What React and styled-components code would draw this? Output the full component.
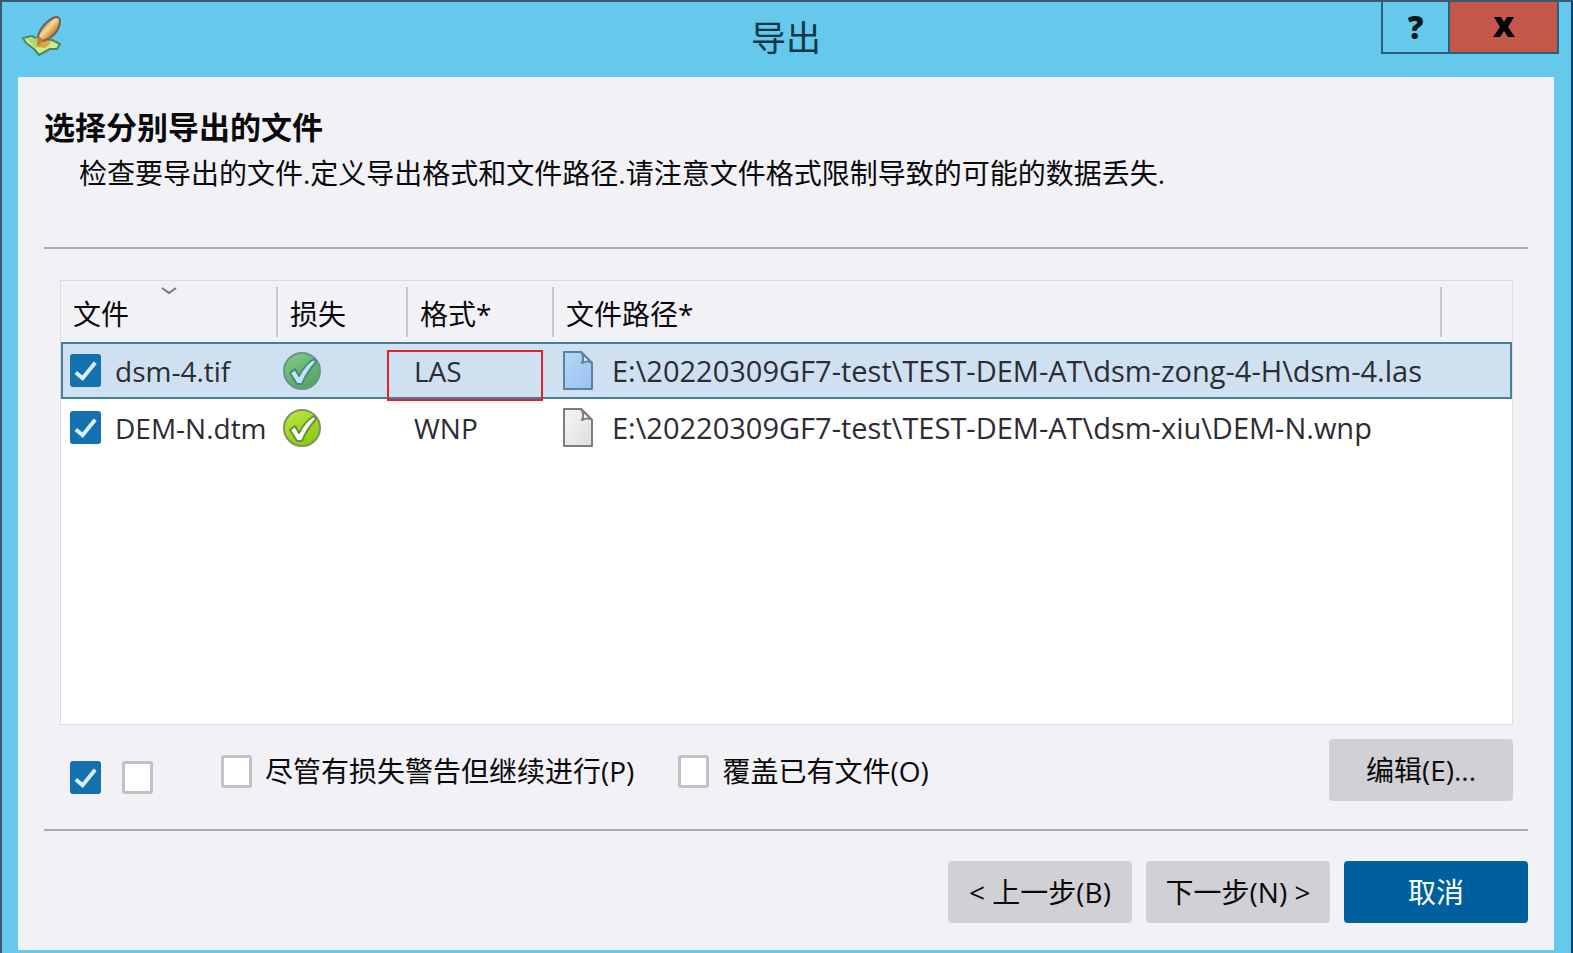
import React, { useState } from "react";
import styled, { createGlobalStyle, css } from "styled-components";

const palette = {
  frame: "#64c9ea",
  edge: "#3c5a6c",
  edgeRight: "#123f70",
  panel: "#f1f1f6",
  text: "#0a0a0c",
  line: "#aaaab0",
  accent: "#1570b0",
  primary: "#005f9e",
  danger: "#c4574a",
};

const columns = [
  { id: "file", label: "文件", width: 217, sorted: true },
  { id: "loss", label: "损失", width: 130 },
  { id: "format", label: "格式*", width: 146 },
  { id: "path", label: "文件路径*" },
  { id: "rest", label: "", width: 70 },
];

const filesData = [
  {
    id: 1,
    name: "dsm-4.tif",
    format: "LAS",
    path: "E:\\20220309GF7-test\\TEST-DEM-AT\\dsm-zong-4-H\\dsm-4.las",
    selected: true,
  },
  {
    id: 2,
    name: "DEM-N.dtm",
    format: "WNP",
    path: "E:\\20220309GF7-test\\TEST-DEM-AT\\dsm-xiu\\DEM-N.wnp",
  },
];

const AppLogo = () => (
  <svg width="40" height="42" viewBox="0 0 40 42" aria-hidden="true">
    <defs>
      <linearGradient id="pen" x1="0" y1="0" x2="1" y2="1">
        <stop offset="0.25" stopColor="#8c7460" />
        <stop offset="0.45" stopColor="#f6dc9c" />
        <stop offset="0.6" stopColor="#dca850" />
        <stop offset="0.85" stopColor="#7a6048" />
      </linearGradient>
    </defs>
    <path
      d="M1 22 L10 20 L16 23 L30 24 L38 28 L35 33 L28 33 L17 39 L12 33 L4 27 Z"
      fill="#cdea8e"
      stroke="#4a8c58"
      strokeWidth="2"
      strokeLinejoin="round"
    />
    <path d="M5 23 L12 22 L18 28 L14 32 Z" fill="#a4dc78" />
    <path d="M14 22 L20 20 L29 27 L23 32 L16 31 Z" fill="#d9a83c" />
    <path
      d="M16 21 C17 13 26 3 34 1 C39 1 39 7 36 13 C33 19 27 23 21 25 Z"
      fill="url(#pen)"
      stroke="#6c6258"
      strokeWidth="2"
      strokeLinejoin="round"
    />
    <path d="M16 20 L22 24 L15 31 Z" fill="#c47c34" />
  </svg>
);

const StatusOk = ({ selected }) => (
  <svg width="40" height="42" viewBox="0 0 40 42" role="img" aria-label="OK">
    <defs>
      <linearGradient
        id={selected ? "ok-selected" : "ok"}
        x1="0"
        y1="0"
        x2="0.6"
        y2="1"
      >
        <stop offset="0" stopColor={selected ? "#86cc8c" : "#bfe94c"} />
        <stop offset="1" stopColor={selected ? "#51a75e" : "#8acc0c"} />
      </linearGradient>
    </defs>
    <circle
      cx="20"
      cy="21"
      r="18"
      fill={selected ? "url(#ok-selected)" : "url(#ok)"}
      stroke={selected ? "#68948e" : "#7f9460"}
      strokeWidth="2"
    />
    <path
      d="M8 23 L13 19 L17 26 C21 18 25 13 32 9 L34 12 C28 19 23 26 20 34 L15 34 Z"
      fill={selected ? "#c0e6f6" : "#fff"}
      stroke={selected ? "#4a8a7c" : "#6c8f3c"}
      strokeWidth="2"
      strokeLinejoin="round"
    />
  </svg>
);

const PageIcon = ({ selected }) => {
  const stroke = selected ? "#5f809e" : "#7c7c7c";

  return (
    <svg width="32" height="40" viewBox="0 0 32 40" aria-hidden="true">
      <defs>
        <linearGradient
          id={selected ? "page-selected" : "page"}
          x1="0"
          y1="0"
          x2="1"
          y2="1"
        >
          <stop offset="0" stopColor={selected ? "#b4d8f8" : "#f6f6f6"} />
          <stop offset="1" stopColor={selected ? "#96c2ee" : "#dedede"} />
        </linearGradient>
      </defs>
      <path
        d="M2 1 H19 L30 12 V38 H2 Z"
        fill={selected ? "url(#page-selected)" : "url(#page)"}
        stroke={stroke}
        strokeWidth="2"
        strokeLinejoin="round"
      />
      <path
        d="M19 1 C22 5 22 8 20 12 C24 10 27 10 30 12 Z"
        fill={selected ? "#dceefc" : "#fff"}
        stroke={stroke}
        strokeWidth="2"
        strokeLinejoin="round"
      />
    </svg>
  );
};

const CheckBox = ({ initial = false, ...rest }) => {
  const [checked, setChecked] = useState(initial);

  return (
    <BoxWrapper>
      <BoxInput
        type="checkbox"
        checked={checked}
        onChange={() => setChecked((prevState) => !prevState)}
        {...rest}
      />
      {checked && (
        <BoxTick viewBox="0 0 32 32" aria-hidden="true">
          <path
            d="M6 18 L13 24 L26 8"
            fill="none"
            stroke="#d8f0ff"
            strokeWidth="4"
          />
        </BoxTick>
      )}
    </BoxWrapper>
  );
};

const App = () => {
  const rows = filesData.map((file) => (
    <FileRow key={file.id} $selected={file.selected}>
      <Cell>
        <CellContent>
          <CheckBox initial aria-label={file.name} />
          {file.name}
        </CellContent>
      </Cell>
      <Cell>
        <CellContent $indent={4}>
          <StatusOk selected={file.selected} />
        </CellContent>
      </Cell>
      <Cell>
        <CellContent $indent={6}>{file.format}</CellContent>
        {file.selected && <Highlight />}
      </Cell>
      <PathCell colSpan={2}>
        <CellContent $indent={8} $gap={18}>
          <PageIcon selected={file.selected} />
          {file.path}
        </CellContent>
      </PathCell>
    </FileRow>
  ));

  return (
    <Window>
      <GlobalStyle />
      <TitleBar>
        <AppLogo />
        <WindowTitle>导出</WindowTitle>
        <WindowButtons>
          <HelpButton type="button" aria-label="Help">
            ?
          </HelpButton>
          <CloseButton type="button" aria-label="Close">
            <svg width="22" height="20" viewBox="0 0 22 20">
              <path d="M1 0 H8 L11 5 L14 0 H21 L15 10 L22 20 H15 L11 14 L7 20 H0 L7 10 Z" />
            </svg>
          </CloseButton>
        </WindowButtons>
      </TitleBar>
      <Panel>
        <Intro>
          <Heading>选择分别导出的文件</Heading>
          <Description>
            检查要导出的文件.定义导出格式和文件路径.请注意文件格式限制导致的可能的数据丢失.
          </Description>
        </Intro>
        <Main>
          <TableFrame>
            <FileTable>
              <thead>
                <tr>
                  {columns.map((column) => (
                    <HeaderCell key={column.id} $width={column.width}>
                      <HeaderLabel>
                        {column.label}
                        {column.sorted && (
                          <SortArrow viewBox="0 0 16 8" aria-hidden="true">
                            <path
                              d="M1 1 L8 6 L15 1"
                              fill="none"
                              stroke="#777"
                              strokeWidth="2"
                            />
                          </SortArrow>
                        )}
                      </HeaderLabel>
                    </HeaderCell>
                  ))}
                </tr>
              </thead>
              <tbody>{rows}</tbody>
            </FileTable>
          </TableFrame>
          <OptionsRow>
            <SelectBoxes>
              <CheckBox initial aria-label="全选" />
              <CheckBox aria-label="全不选" />
            </SelectBoxes>
            <Option>
              <CheckBox />
              尽管有损失警告但继续进行(P)
            </Option>
            <Option>
              <CheckBox />
              覆盖已有文件(O)
            </Option>
            <EditButton type="button">编辑(E)...</EditButton>
          </OptionsRow>
        </Main>
        <Footer>
          <Button type="button">&lt; 上一步(B)</Button>
          <Button type="button">下一步(N) &gt;</Button>
          <Button type="button" $primary>
            取消
          </Button>
        </Footer>
      </Panel>
    </Window>
  );
};

export default App;

const GlobalStyle = createGlobalStyle`
  * {
    box-sizing: border-box;
  }

  body {
    margin: 0;
    font-family: "Open Sans", "Noto Sans CJK SC", sans-serif;
    font-size: 28px;
    line-height: 40px;
    color: ${palette.text};
  }
`;

const Window = styled.div`
  display: flex;
  flex-direction: column;
  min-height: 100vh;
  padding: 0 17px 3px 16px;
  background: ${palette.frame};
  border: 2px solid ${palette.edge};
  border-right-color: ${palette.edgeRight};
  border-bottom: 0;
`;

const TitleBar = styled.header`
  display: grid;
  grid-template-columns: 1fr auto 1fr;
  height: 75px;

  > svg {
    margin: 14px 0 0 4px;
  }
`;

const WindowTitle = styled.h1`
  margin: 0;
  font-size: 35px;
  font-weight: 400;
  line-height: 72px;
  color: #0c3648;
`;

const WindowButtons = styled.div`
  display: flex;
  justify-content: flex-end;
  align-items: flex-start;
  margin-right: -5px;
`;

const windowButtonStyles = css`
  display: flex;
  justify-content: center;
  align-items: center;
  height: 52px;
  padding: 0;
  border: 2px solid #27617c;
  border-top: 0;
`;

const HelpButton = styled.button`
  ${windowButtonStyles};
  width: 67px;
  border-right: 0;
  background: transparent;
  color: #04141c;
  font: 800 31px "Open Sans", sans-serif;
`;

const CloseButton = styled.button`
  ${windowButtonStyles};
  width: 111px;
  background: ${palette.danger};
`;

const Panel = styled.main`
  display: flex;
  flex-direction: column;
  flex: 1;
  padding: 28px 26px;
  background: ${palette.panel};
`;

const Intro = styled.section`
  height: 144px;
  border-bottom: 2px solid ${palette.line};
`;

const Heading = styled.h2`
  margin: 0;
  font-size: 31px;
  line-height: 44px;
`;

const Description = styled.p`
  margin: 0 0 0 35px;
  line-height: 48px;
`;

const Main = styled.section`
  display: flex;
  flex-direction: column;
  flex: 1;
  padding: 31px 15px 28px 16px;
  border-bottom: 2px solid ${palette.line};
`;

const TableFrame = styled.div`
  flex: 1;
  background: #fff;
  border: 1px solid #dcdce0;
`;

const FileTable = styled.table`
  width: 100%;
  table-layout: fixed;
  border-collapse: collapse;
`;

const HeaderCell = styled.th`
  width: ${({ $width }) => ($width ? `${$width}px` : "auto")};
  height: 61px;
  padding: 6px 0 5px;
  background: ${palette.panel};
  font-weight: 400;
  text-align: left;
`;

const HeaderLabel = styled.div`
  position: relative;
  height: 50px;
  padding-left: 12px;
  line-height: 54px;
  border-right: 2px solid #c8c8cc;

  ${HeaderCell}:last-child & {
    border-right: 0;
  }
`;

const SortArrow = styled.svg`
  position: absolute;
  top: 0;
  left: calc(50% - 8px);
  width: 16px;
  height: 8px;
`;

const FileRow = styled.tr`
  height: 57px;

  ${({ $selected }) =>
    $selected &&
    css`
      background: #cfe1f0;
      outline: 2px solid #44809c;
      outline-offset: -2px;
    `}
`;

const Cell = styled.td`
  position: relative;
  padding: 0;
  color: #2c2c34;
  white-space: nowrap;
`;

const PathCell = styled(Cell)`
  font-size: 29px;
`;

const CellContent = styled.div`
  display: flex;
  align-items: center;
  gap: ${({ $gap = 14 }) => $gap}px;
  padding-left: ${({ $indent = 9 }) => $indent}px;
`;

const Highlight = styled.span`
  position: absolute;
  top: 8px;
  left: -21px;
  width: 156px;
  height: 51px;
  border: 2px solid #e0202c;
  z-index: 1;
`;

const BoxWrapper = styled.span`
  display: grid;
  flex: none;

  > * {
    grid-area: 1 / 1;
  }
`;

const BoxInput = styled.input`
  appearance: none;
  width: 31px;
  height: 33px;
  margin: 0;
  background: #fff;
  border: 3px solid #c2c2c6;
  border-radius: 3px;

  &:checked {
    background: ${palette.accent};
    border-color: ${palette.accent};
  }
`;

const BoxTick = styled.svg`
  width: 31px;
  height: 33px;
  pointer-events: none;
`;

const OptionsRow = styled.div`
  display: flex;
  align-items: flex-start;
  padding-top: 14px;
`;

const SelectBoxes = styled.div`
  display: flex;
  gap: 21px;
  padding: 22px 68px 0 10px;
`;

const Option = styled.label`
  display: flex;
  align-items: center;
  gap: 13px;
  margin: 12px 44px 0 0;
`;

const Button = styled.button`
  width: 184px;
  height: 62px;
  padding: 0;
  border: 0;
  border-radius: 4px;
  font: inherit;
  color: ${({ $primary }) => ($primary ? "#fff" : palette.text)};
  background: ${({ $primary }) => ($primary ? palette.primary : "#d0d0d5")};
`;

const EditButton = styled(Button)`
  margin-left: auto;
`;

const Footer = styled.footer`
  display: flex;
  justify-content: flex-end;
  gap: 14px;
  padding-top: 30px;
  margin-bottom: -1px;
`;
